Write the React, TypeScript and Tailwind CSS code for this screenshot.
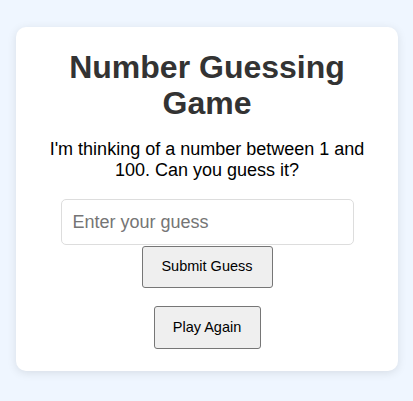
export default function App() {
  return (
    <div
      className="min-h-screen bg-[#eff6ff] pt-[27px] pb-[31px]"
      style={{ fontFamily: '"Liberation Sans", Arial, sans-serif' }}
    >
      <div className="ml-[16px] flex w-[382px] flex-col items-center rounded-[10px] bg-white px-[20px] pt-[21.5px] pb-[21.5px] text-center shadow-[0_2px_10px_rgba(0,0,0,0.1)]">
        <h1 className="m-0 text-[32px] font-bold leading-[1.15] text-[#333333]">
          Number Guessing Game
        </h1>
        <p className="mt-[17.4px] text-[18px] leading-[1.15] text-black">
          I'm thinking of a number between 1 and 100. Can you guess it?
        </p>
        <input
          type="text"
          placeholder="Enter your guess"
          className="mt-[18.6px] block h-[45.5px] w-[293px] rounded-[5px] border border-[#dddddd] bg-white px-[11px] text-[18px] text-black outline-none placeholder:text-[#757575]"
        />
        <button className="mt-[1px] flex h-[42px] w-[131px] items-center justify-center rounded-[3px] border border-[#767676] bg-[#efefef] text-[14.5px] text-black">
          Submit Guess
        </button>
        <button className="mt-[18px] flex h-[43.5px] w-[107px] items-center justify-center rounded-[3px] border border-[#767676] bg-[#efefef] text-[14.5px] text-black">
          Play Again
        </button>
      </div>
    </div>
  );
}
